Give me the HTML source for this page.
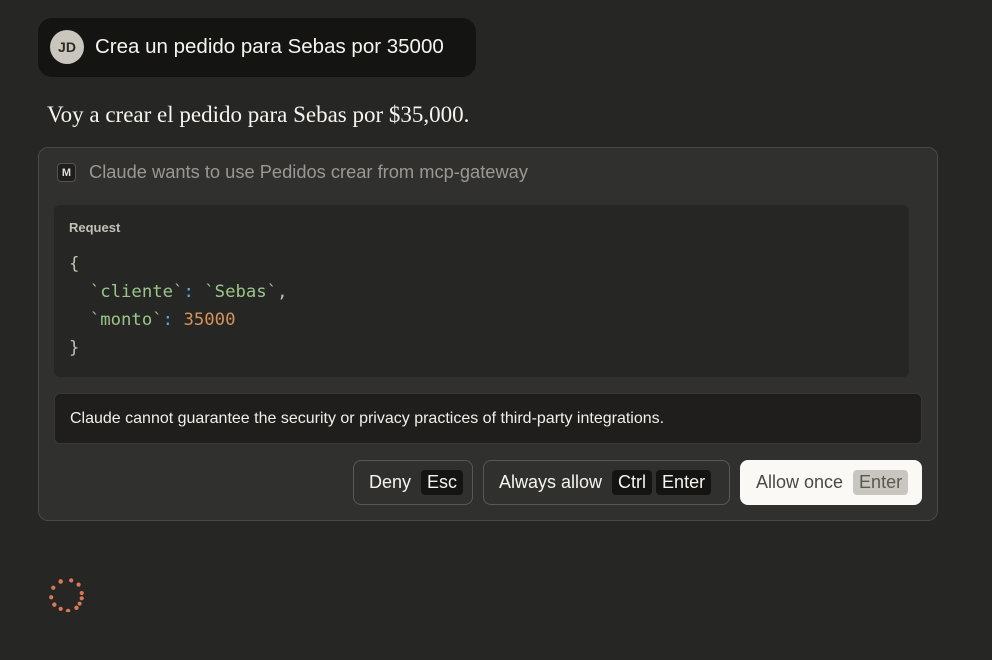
<!DOCTYPE html>
<html><head><meta charset="utf-8"><style>
*{box-sizing:border-box;margin:0;padding:0}
body{width:992px;height:660px;background:#262624;font-family:"Liberation Sans",sans-serif;position:relative;overflow:hidden;color:#f5f4ef}
.abs{position:absolute}
.bubble{left:38px;top:18px;width:438px;height:59px;background:#141413;border-radius:14px}
.av{left:50px;top:30px;width:34px;height:34px;border-radius:50%;background:#c9c6bd;color:#2b2a27;font-weight:bold;font-size:14px;display:flex;align-items:center;justify-content:center}
.utext{left:95px;top:35px;font-size:20.5px;color:#f5f4ef;white-space:nowrap}
.reply{left:47px;top:102px;font-family:"Liberation Serif",serif;font-size:23px;color:#f5f4ef;white-space:nowrap}
.card{left:38px;top:147px;width:900px;height:374px;background:#30302e;border:1px solid #4a4945;border-radius:10px}
.micon{left:57px;top:163px;width:19px;height:19px;border:1px solid #55534e;border-radius:4px;background:#1f1e1d;font-size:11px;font-weight:bold;color:#ddd;display:flex;align-items:center;justify-content:center}
.title{left:89px;top:161px;font-size:18.3px;color:#9a9891;white-space:nowrap}
.code{left:54px;top:205px;width:855px;height:172px;background:#262624;border-radius:6px}
.req{left:69px;top:220px;font-size:13px;font-weight:bold;color:#c2c0b6}
.mono{font-family:"DejaVu Sans Mono","Liberation Mono",monospace;font-size:17.3px;color:#c2c0b6;white-space:pre;line-height:28px}
.g{color:#9cc58a}.b{color:#5aa9e6}.o{color:#d4925a}
.note{left:54px;top:393px;width:868px;height:51px;background:#1f1e1d;border:1px solid #3a3936;border-radius:6px;font-size:16px;color:#f0efe9;padding:16px 15px;white-space:nowrap}
.btn{top:460px;height:45px;border:1px solid #5a5853;border-radius:8px;display:flex;align-items:center;font-size:18px;color:#f5f4ef;padding:0 10px 0 15px;gap:10px;white-space:nowrap}
.k{background:#141413;border-radius:4px;padding:2px 6px;font-size:18px}
</style></head><body>
<div class="abs bubble"></div>
<div class="abs av">JD</div>
<div class="abs utext">Crea un pedido para Sebas por 35000</div>
<div class="abs reply">Voy a crear el pedido para Sebas por $35,000.</div>
<div class="abs card"></div>
<div class="abs micon">M</div>
<div class="abs title">Claude wants to use Pedidos crear from mcp-gateway</div>
<div class="abs code"></div>
<div class="abs req">Request</div>
<div class="abs mono" style="left:69px;top:250px">{
  <span class="g">`cliente`</span><span class="b">:</span> <span class="g">`Sebas`</span>,
  <span class="g">`monto`</span><span class="b">:</span> <span class="o">35000</span>
}</div>
<div class="abs note">Claude cannot guarantee the security or privacy practices of third-party integrations.</div>
<div class="abs btn" style="left:353px;width:120px">Deny <span class="k">Esc</span></div>
<div class="abs btn" style="left:483px;width:247px">Always allow <span style="display:flex;gap:4px"><span class="k">Ctrl</span><span class="k">Enter</span></span></div>
<div class="abs btn" style="left:740px;width:182px;background:#faf9f5;border-color:#faf9f5;color:#4a4945">Allow once <span class="k" style="background:#c8c6bf;color:#5a5853">Enter</span></div>
<svg class="abs" style="left:47px;top:572px" width="40" height="40" viewBox="0 0 38 38">
<g fill="#d97757">
<circle cx="13" cy="9" r="2.2"/><circle cx="23" cy="8" r="2"/><circle cx="30" cy="12" r="2"/><circle cx="6" cy="15" r="2"/><circle cx="33" cy="20" r="2"/><circle cx="4" cy="24" r="2"/><circle cx="33" cy="25" r="2"/><circle cx="7" cy="31" r="2.1"/><circle cx="31" cy="30" r="1.9"/><circle cx="13" cy="35" r="2"/><circle cx="28" cy="34" r="2.1"/><circle cx="20" cy="37" r="2.1"/>
</g></svg>
</body></html>
